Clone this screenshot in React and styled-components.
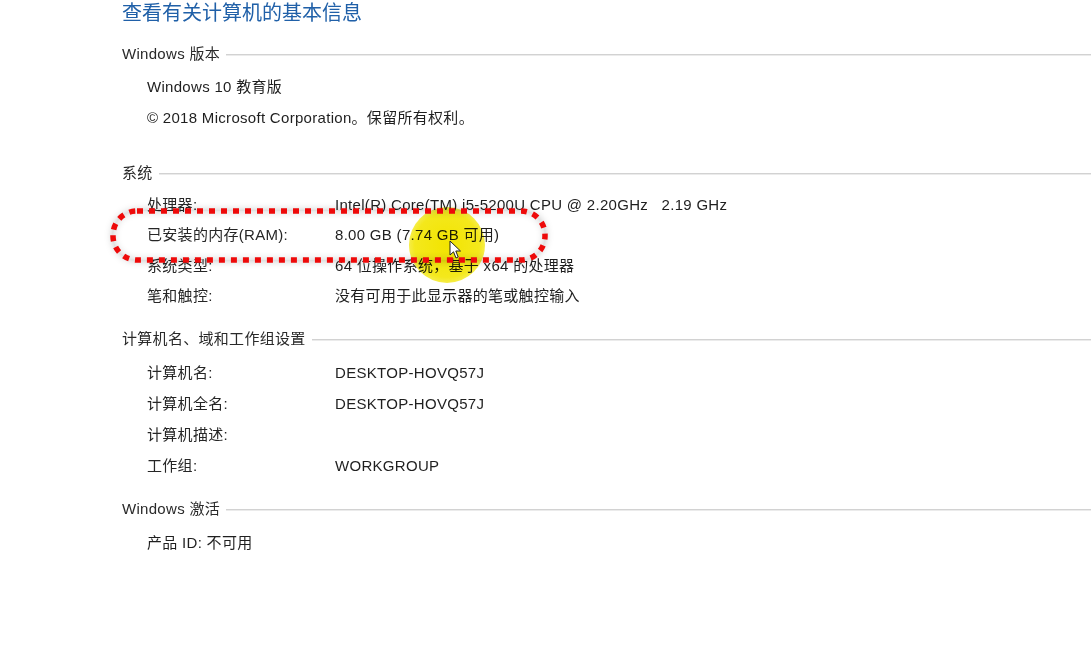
import React from "react";
import styled, { createGlobalStyle } from "styled-components";

const GlobalStyle = createGlobalStyle`
  html, body {
    margin: 0;
    padding: 0;
    background: #ffffff;
  }
`;

const sections = [
  {
    title: "Windows 版本",
    gap: 12,
    rowHeight: 31,
    rows: [
      { text: "Windows 10 教育版" },
      { text: "© 2018 Microsoft Corporation。保留所有权利。" },
    ],
  },
  {
    title: "系统",
    gap: 24,
    rowHeight: 30.4,
    rows: [
      { label: "处理器:", value: "Intel(R) Core(TM) i5-5200U CPU @ 2.20GHz\u00a0\u00a0\u00a02.19 GHz" },
      { label: "已安装的内存(RAM):", value: "8.00 GB (7.74 GB 可用)" },
      { label: "系统类型:", value: "64 位操作系统，基于 x64 的处理器" },
      { label: "笔和触控:", value: "没有可用于此显示器的笔或触控输入" },
    ],
  },
  {
    title: "计算机名、域和工作组设置",
    gap: 12,
    rowHeight: 31,
    rows: [
      { label: "计算机名:", value: "DESKTOP-HOVQ57J" },
      { label: "计算机全名:", value: "DESKTOP-HOVQ57J" },
      { label: "计算机描述:", value: "" },
      { label: "工作组:", value: "WORKGROUP" },
    ],
  },
  {
    title: "Windows 激活",
    gap: 13,
    rowHeight: 31,
    rows: [{ text: "产品 ID: 不可用" }],
  },
];

const App = () => (
  <>
    <GlobalStyle />
    <Page>
      <Title>查看有关计算机的基本信息</Title>
      {sections.map((s) => (
        <Section key={s.title} $gap={s.gap}>
          <Heading>
            <span>{s.title}</span>
            <Rule />
          </Heading>
          <Rows>
            {s.rows.map((r, i) =>
              r.text ? (
                <Row key={i} $h={s.rowHeight}>
                  <Single>{r.text}</Single>
                </Row>
              ) : (
                <Row key={i} $h={s.rowHeight}>
                  <Label>{r.label}</Label>
                  <Value>{r.value}</Value>
                </Row>
              )
            )}
          </Rows>
        </Section>
      ))}

      <Highlight />
      <Marker>
        <svg width="438" height="55" viewBox="0 0 438 55">
          <rect
            x="3"
            y="3"
            width="432"
            height="49"
            rx="24"
            ry="24"
            fill="none"
            stroke="#ee0a0a"
            strokeWidth="5.5"
            strokeDasharray="6 6"
          />
        </svg>
      </Marker>
      <Cursor>
        <svg width="14" height="20" viewBox="0 0 14 20">
          <path
            d="M1 1 L1 15 L4.5 11.8 L7 18 L9.2 17 L6.8 11 L11.5 11 Z"
            fill="#ffffff"
            stroke="#222"
            strokeWidth="1"
            strokeLinejoin="round"
          />
        </svg>
      </Cursor>
    </Page>
  </>
);

const Page = styled.div`
  position: relative;
  width: 1091px;
  height: 648px;
  overflow: hidden;
  background: #fff;
  padding-left: 122px;
  box-sizing: border-box;
  font-family: "Liberation Sans", "Noto Sans CJK SC", sans-serif;
  color: #1f1f1f;
`;

const Title = styled.div`
  height: 26px;
  line-height: 26px;
  font-size: 20px;
  color: #2060a8;
`;

const Section = styled.section`
  margin-top: ${(p) => p.$gap}px;
`;

const Heading = styled.div`
  display: flex;
  align-items: center;
  height: 28px;
  font-size: 15px;
  letter-spacing: 0.3px;
  color: #2a2a2a;
  margin-bottom: 5px;
`;

const Rule = styled.div`
  flex: 1;
  margin-left: 6px;
  margin-top: 5px;
  border-top: 1px solid #d2d2d2;
  border-bottom: 1px solid #ebebeb;
`;

const Rows = styled.div`
  display: flex;
  flex-direction: column;
  padding-left: 25px;
`;

const Row = styled.div`
  display: grid;
  grid-template-columns: 188px 1fr;
  height: ${(p) => p.$h}px;
  line-height: ${(p) => p.$h}px;
  font-size: 15px;
  letter-spacing: 0.3px;
  white-space: nowrap;
`;

const Single = styled.span`
  grid-column: 1 / span 2;
`;

const Label = styled.span`
  color: #262626;
`;

const Value = styled.span`
  color: #1f1f1f;
`;

const Highlight = styled.div`
  position: absolute;
  left: 409px;
  top: 207px;
  width: 76px;
  height: 76px;
  border-radius: 50%;
  background: radial-gradient(
    circle,
    #f2e400 0%,
    #f4e81c 60%,
    rgba(245, 236, 60, 0.85) 75%,
    rgba(255, 255, 255, 0) 100%
  );
  mix-blend-mode: multiply;
  pointer-events: none;
`;

const Marker = styled.div`
  position: absolute;
  left: 110px;
  top: 208px;
  width: 438px;
  height: 55px;
  pointer-events: none;

  &::before {
    content: "";
    position: absolute;
    left: 3px;
    top: 3px;
    right: 3px;
    bottom: 3px;
    border-radius: 24px;
    box-shadow: 0 0 9px rgba(0, 0, 0, 0.28), inset 0 0 9px rgba(0, 0, 0, 0.2);
  }

  svg {
    position: relative;
    display: block;
  }
`;

const Cursor = styled.div`
  position: absolute;
  left: 449px;
  top: 240px;
  pointer-events: none;

  svg {
    display: block;
  }
`;

export default App;
